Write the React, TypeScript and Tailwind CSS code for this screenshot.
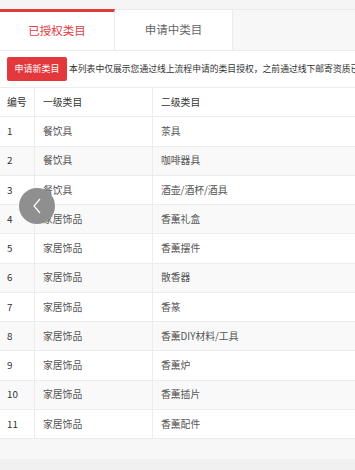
import React from "react";

const rows: [string, string, string][] = [
  ["1", "餐饮具", "茶具"],
  ["2", "餐饮具", "咖啡器具"],
  ["3", "餐饮具", "酒壶/酒杯/酒具"],
  ["4", "家居饰品", "香薰礼盒"],
  ["5", "家居饰品", "香薰摆件"],
  ["6", "家居饰品", "散香器"],
  ["7", "家居饰品", "香篆"],
  ["8", "家居饰品", "香薰DIY材料/工具"],
  ["9", "家居饰品", "香薰炉"],
  ["10", "家居饰品", "香薰插片"],
  ["11", "家居饰品", "香薰配件"],
];

export default function App() {
  return (
    <div
      className="w-[355px] h-[470px] overflow-hidden bg-[#f0f0f0] relative"
      style={{ fontFamily: '"Noto Sans CJK SC", "Noto Sans", sans-serif' }}
    >
      <div className="h-[9px] bg-[#f5f5f5]" />
      {/* tabs */}
      <div className="flex h-[42px] bg-[#f7f7f7] border-t border-b border-[#ebebeb]">
        <div className="w-[115px] bg-white border-t-[3px] border-[#e4393c] border-r border-r-[#ececec] flex items-center justify-center text-[11.5px] text-[#e4393c] -mt-px">
          已授权类目
        </div>
        <div className="w-[118px] bg-white border-r border-[#ececec] flex items-center justify-center text-[11.5px] text-[#666]">
          申请中类目
        </div>
        <div className="flex-1" />
      </div>
      {/* notice */}
      <div className="bg-white h-[37px] flex items-center pl-[7px] border-b border-[#ececec] overflow-hidden">
        <div className="shrink-0 w-[60px] h-[24px] bg-[#e4393c] rounded-[2px] text-white text-[9px] flex items-center justify-center">
          申请新类目
        </div>
        <div className="ml-[2px] whitespace-nowrap text-[8.8px] text-[#333]">
          本列表中仅展示您通过线上流程申请的类目授权，之前通过线下邮寄资质已经获得授权的类目请在此处查看
        </div>
      </div>
      {/* table */}
      <div className="bg-white">
        <div className="flex h-[29.25px] border-b border-[#ececec] text-[9.8px] text-[#333]">
          <div className="w-[35px] border-r border-[#ececec] flex items-center pl-[7px]">编号</div>
          <div className="w-[118px] border-r border-[#ececec] flex items-center pl-[8px]">一级类目</div>
          <div className="flex-1 flex items-center pl-[8px]">二级类目</div>
        </div>
        {rows.map((r, i) => (
          <div
            key={r[0]}
            className={`flex h-[29.25px] border-b border-[#ececec] text-[9.8px] ${
              i % 2 === 1 ? "bg-[#f9f9f9]" : "bg-white"
            }`}
          >
            <div className="w-[35px] border-r border-[#ececec] flex items-center pl-[7px] text-[#333]">
              {r[0]}
            </div>
            <div className="w-[118px] border-r border-[#ececec] flex items-center pl-[8px] text-[#555]">
              {r[1]}
            </div>
            <div className="flex-1 flex items-center pl-[8px] text-[#555]">{r[2]}</div>
          </div>
        ))}
      </div>
      <div className="h-[20px] bg-[#f7f7f7]" />
      {/* overlay back button */}
      <div className="absolute left-[19px] top-[188px] w-[36px] h-[36px] rounded-full bg-[#8f8f8f] flex items-center justify-center">
        <svg width="12" height="16" viewBox="0 0 12 16" fill="none">
          <path d="M9 1 L3 8 L9 15" stroke="white" strokeWidth="1.2" />
        </svg>
      </div>
    </div>
  );
}
